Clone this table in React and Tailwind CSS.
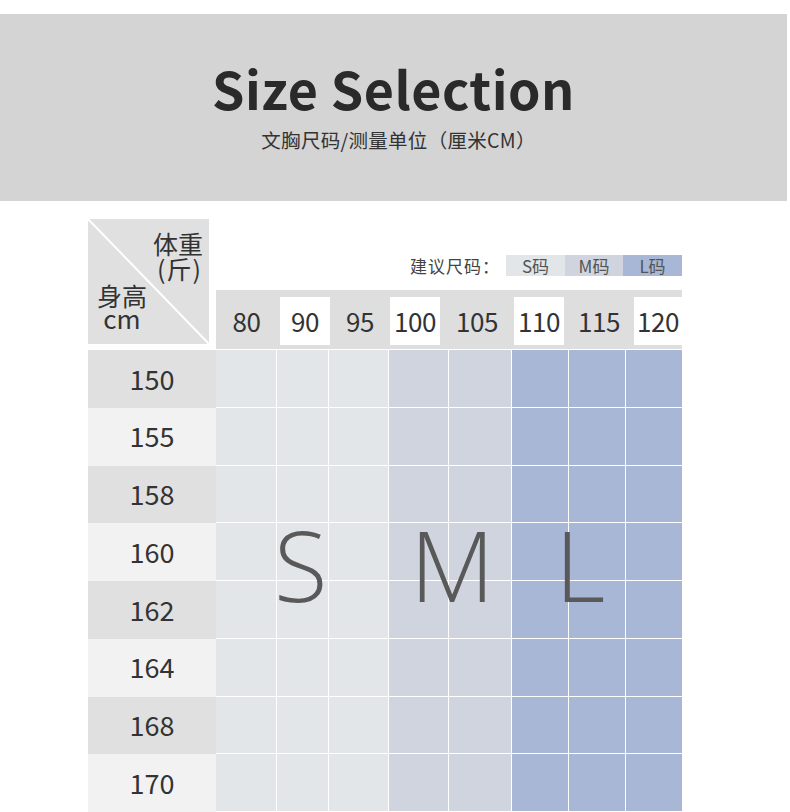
import React from "react";

const cols = [
  { w: "w-[61px]", c: "bg-[#e2e6e9]" },
  { w: "w-[52px]", c: "bg-[#e2e6e9]" },
  { w: "w-[60px]", c: "bg-[#e2e6e9]" },
  { w: "w-[60px]", c: "bg-[#cfd4de]" },
  { w: "w-[63px]", c: "bg-[#cfd4de]" },
  { w: "w-[57px]", c: "bg-[#a8b7d6]" },
  { w: "w-[57px]", c: "bg-[#a8b7d6]" },
  { w: "w-[56px]", c: "bg-[#a8b7d6]" },
];

const rows = ["150", "155", "158", "160", "162", "164", "168", "170"];

const font = { fontFamily: '"Noto Sans CJK SC", "Noto Sans", sans-serif' };

export default function App() {
  return (
    <div className="w-[790px] h-[812px] overflow-hidden bg-white text-[#333]" style={font}>
      <div className="h-[14px]" />
      <header className="h-[187px] mr-[3px] bg-[#d4d4d4] flex flex-col items-center">
        <h1 className="mt-[44px] text-[52px] leading-[60px] font-bold text-[#2a2a2a] tracking-[0.5px]">Size Selection</h1>
        <p className="mt-[9px] ml-[10px] text-[19.5px] leading-[26px] text-[#333] tracking-[0.3px]">文胸尺码/测量单位（厘米CM）</p>
      </header>

      <div className="pl-[88px] pt-[18px]">
        <div className="w-[594px]">
          {/* top section */}
          <div className="flex">
            <div className="relative w-[121px] h-[125px] bg-[#e0e0e0]">
              <svg className="absolute inset-0" width="121" height="125" viewBox="0 0 121 125">
                <line x1="0" y1="0" x2="121" y2="125" stroke="#ffffff" strokeWidth="2" />
              </svg>
              <div className="absolute right-[6px] top-[12px] text-[25px] leading-[25px] text-[#333] flex flex-col items-end">
                <span>体重</span>
                <span className="mr-[1px] tracking-[1px]">(斤)</span>
              </div>
              <div className="absolute left-[9px] top-[64px] text-[25px] leading-[24px] text-[#333] flex flex-col items-center">
                <span>身高</span>
                <span className="leading-[22px] text-[26px]">cm</span>
              </div>
            </div>
            <div className="ml-[7px] w-[466px] flex flex-col">
              <div className="h-[71px] flex justify-end items-start pt-[36px]">
                <span className="text-[17px] leading-[21px] text-[#444] mr-[6px] tracking-[1px]">建议尺码：</span>
                <span className="w-[59px] h-[21px] bg-[#e2e6e9] text-[17px] leading-[21px] text-[#555] flex justify-center">S码</span>
                <span className="w-[58px] h-[21px] bg-[#cfd4de] text-[17px] leading-[21px] text-[#555] flex justify-center">M码</span>
                <span className="w-[59px] h-[21px] bg-[#a8b7d6] text-[17px] leading-[21px] text-[#555] flex justify-center">L码</span>
              </div>
              <div className="h-[59px] bg-[#dedede] flex items-start pt-[7px] text-[26px] leading-[48px] text-[#333] tracking-[-0.5px]">
                <div className="w-[61px] h-[48px] text-center">80</div>
                <div className="w-[3px]" />
                <div className="w-[50px] h-[48px] bg-white text-center">90</div>
                <div className="w-[60px] h-[48px] text-center">95</div>
                <div className="w-[50px] h-[48px] bg-white text-center">100</div>
                <div className="w-[74px] h-[48px] text-center">105</div>
                <div className="w-[50px] h-[48px] bg-white text-center">110</div>
                <div className="w-[70px] h-[48px] text-center">115</div>
                <div className="w-[48px] h-[48px] bg-white text-center">120</div>
              </div>
            </div>
          </div>

          {/* data */}
          <div className="flex mt-[1px]">
            <div className="w-[128px] flex flex-col">
              {rows.map((r, i) => (
                <div
                  key={r}
                  className={`h-[57.75px] flex items-center justify-center text-[27px] text-[#333] ${i % 2 === 0 ? "bg-[#e0e0e0]" : "bg-[#f2f2f2]"}`}
                >
                  {r}
                </div>
              ))}
            </div>
            <div className="relative flex flex-col">
              {rows.map((r) => (
                <div key={r} className="flex h-[57.75px]">
                  {cols.map((c, j) => (
                    <div
                      key={j}
                      className={`${c.w} h-full border-b border-white ${j < 7 ? "border-r" : ""} ${c.c}`}
                    />
                  ))}
                </div>
              ))}
              <div
                className="absolute left-0 right-0 top-[166px] flex text-[98px] leading-[96px] font-light text-[#595959]"
                style={{ fontFamily: '"Open Sans", "Noto Sans", sans-serif' }}
              >
                <span className="absolute left-[58px]">S</span>
                <span className="absolute left-[194px]">M</span>
                <span className="absolute left-[339px]">L</span>
              </div>
            </div>
          </div>
        </div>
      </div>
    </div>
  );
}
